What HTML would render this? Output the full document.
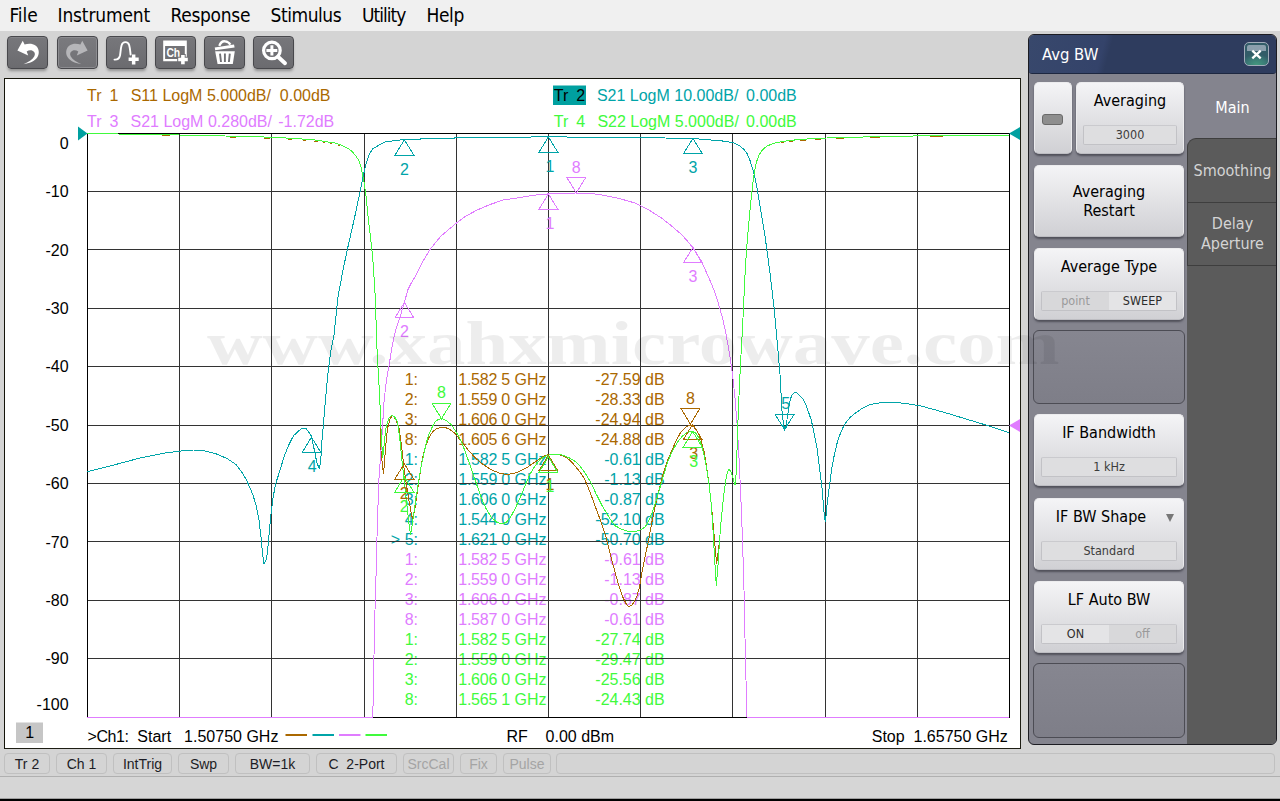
<!DOCTYPE html>
<html><head><meta charset="utf-8"><title>Network Analyzer</title>
<style>
*{box-sizing:border-box;margin:0;padding:0}
html,body{width:1280px;height:801px;overflow:hidden;background:#d4d4d4;font-family:"Liberation Sans",sans-serif}
.abs{position:absolute}
#menubar{position:absolute;left:0;top:0;width:1280px;height:31px;background:#f0f0f0}
#menubar span{position:absolute;top:3px;font-family:"DejaVu Sans Condensed","DejaVu Sans","Liberation Sans",sans-serif;font-size:19px;color:#000;line-height:24px;white-space:pre}
#toolbar{position:absolute;left:0;top:31px;width:1280px;height:47px;background:#d4d4d4}
.tb{position:absolute;top:5px;width:41px;height:33px;border-radius:4px;border:1px solid #48484c;background:linear-gradient(#77777b,#6b6b6f);box-shadow:inset 0 1px 0 rgba(255,255,255,.10),0 3px 3px -1px rgba(0,0,0,.33)}
.tb svg{position:absolute;left:-1px;top:-1px}
#win{position:absolute;left:4px;top:78px;width:1017px;overflow:hidden;height:671px;background:#fff;border:1px solid #14140a;border-right-color:#1e1e14;border-bottom-color:#1e1e14}
#chart{position:absolute;left:0;top:0}
#panel{position:absolute;left:1028px;top:34px;width:249px;height:711px;background:#84848e;border-radius:6px;border:1px solid #1c1c22}
#ptitle{position:absolute;left:0;top:0;width:247px;height:39px;background:linear-gradient(105deg,#38486c 0,#34436a 30%,#2e3c5e 33%);border-radius:5px 5px 3px 3px;border-bottom:1px solid #1d2740}
#statusbar{position:absolute;left:0;top:750px;width:1280px;height:28px;background:#d4d4d4}
#bottom{position:absolute;left:0;top:778px;width:1280px;height:23px;background:#d0d0d0}

#panel{font-family:"DejaVu Sans Condensed","DejaVu Sans","Liberation Sans",sans-serif;overflow:hidden}
#pclose{position:absolute;left:215px;top:7px;width:25px;height:24px;border:1px solid #a2acba;border-radius:5px;background:radial-gradient(ellipse 16px 11px at 50% 100%,#44997f,#3a7a76 60%,#325c68 100%);overflow:hidden}
#pclose:before{content:"";position:absolute;left:2px;right:2px;top:2px;height:6px;background:#8b9fad;border-radius:2px 2px 0 0}
#pclose svg{position:absolute;left:-1px;top:-1px}
#tabs{position:absolute;left:158px;top:114px;width:90px;height:596px;background:#5b5b5b}
.tab{position:absolute;left:158px;width:90px;background:#5b5b5b;border:1px solid #3e3e3e;border-right:none;color:#d4d4d4;font-size:16px;text-align:center}
.tab.sel{background:#84848e;border-color:#84848e;color:#fff}
.tab span{position:absolute;left:0;width:89px;line-height:20px}
.pb{position:absolute;width:150px;height:72px;border-radius:5px;background:linear-gradient(#f4f4f6,#e0e0e3 55%,#d0d0d4);box-shadow:0 2px 2px rgba(40,40,50,.55);border:1px solid #ececee;border-bottom-color:#bdbdc2}
.pb b{position:absolute;left:0;width:100%;text-align:center;font-weight:normal;font-size:16px;line-height:19px;color:#000}
.pb u{position:absolute;left:6px;right:6px;top:42.4px;height:20px;text-decoration:none;border:1px solid #c2c2c6;border-top-color:#cacace;background:#dedee0;font-size:12.5px;line-height:17px;text-align:center;color:#3c3c3c;border-radius:2px}
.pb u.sp{display:flex}
.pb u s{flex:1;text-decoration:none}
.pb u s.on{background:#e4e4e6;color:#2c2c2c}
.pb u s.off{background:#d8d8da;color:#9a9a9a}
.led{position:absolute;left:7px;top:31px;width:21px;height:11px;border-radius:3px;background:#8e8e8e;border:1px solid #6a6a6a}
.dd{position:absolute;left:131px;top:15px;width:0;height:0;border-left:4.5px solid transparent;border-right:4.5px solid transparent;border-top:8px solid #777}
.slot{position:absolute;left:4px;width:152px;height:74px;border-radius:6px;border:1px solid #4c4c54;background:linear-gradient(#868690,#7e7e88)}

.sb{position:absolute;top:3px;height:21px;border:1px solid #c0c0c0;border-radius:4px;font-size:14px;line-height:20px;text-align:center;color:#1c1c24;white-space:pre}
.sb.dis{color:#a4a4a4}
#statusbar{border-bottom:1px solid #b0b0b0;height:27px}
#bottom{top:777px;height:24px;background:#d6d6d6;border-bottom:2px solid #000;box-shadow:inset 0 -1px 0 #a0a0a0}
.tb.dis{background:linear-gradient(#7a7a7e,#717175);box-shadow:inset 0 0 0 1px #8c8c90,0 2px 2px rgba(0,0,0,.12)}
#wm{position:absolute;left:207px;top:308px;font-family:"Liberation Serif",serif;font-weight:bold;font-size:62px;line-height:70px;transform:scaleX(1.24);transform-origin:0 0;color:rgba(0,0,0,.07);white-space:nowrap;pointer-events:none}
</style></head>
<body>
<div id="menubar">
<span style="left:9.5px;letter-spacing:-.1px">File</span><span style="left:57.5px;letter-spacing:-.15px">Instrument</span><span style="left:170.5px;letter-spacing:-.3px">Response</span><span style="left:270.5px;letter-spacing:-.45px">Stimulus</span><span style="left:362px;letter-spacing:-1px">Utility</span><span style="left:426.5px;letter-spacing:-.4px">Help</span>
</div>
<div id="toolbar">
<div class="tb" style="left:7px"><svg width="41" height="33" viewBox="0 0 41 33"><path d="M10.4 14.4L15.75 4.75L17.6 8.6C21 7.2 25.5 7.2 28.5 9.5C32 12.2 32.8 17 30.5 21C28 25.2 22 27.5 16.5 28.2C21.5 26 25.5 23.5 27.2 20.5C28.6 17.8 27.8 15.6 25.5 14.7C23.5 14 21.5 14.3 19.7 15.4L21.2 19.4Z" fill="#fff"/></svg></div>
<div class="tb dis" style="left:57px"><svg width="41" height="33" viewBox="0 0 41 33"><g transform="translate(41,0) scale(-1,1)"><path d="M10.4 14.4L15.75 4.75L17.6 8.6C21 7.2 25.5 7.2 28.5 9.5C32 12.2 32.8 17 30.5 21C28 25.2 22 27.5 16.5 28.2C21.5 26 25.5 23.5 27.2 20.5C28.6 17.8 27.8 15.6 25.5 14.7C23.5 14 21.5 14.3 19.7 15.4L21.2 19.4Z" fill="#b6b6b9"/></g></svg></div>
<div class="tb" style="left:106px"><svg width="41" height="33" viewBox="0 0 41 33"><path d="M8.5 23.6C11.5 23.8 13.3 22.6 14 19.5C14.6 16.5 14.6 12.5 15.6 9.2C16.4 6.8 18 6.1 19.4 6.1C21 6.1 22.5 6.9 23.2 9.2C24.1 12.3 24.2 15.5 24.6 18.5" stroke="#fff" stroke-width="1.9" fill="none" stroke-linecap="round"/><path d="M22.6 21.6H25.9V18.6H29.4V21.6H32.7V25.1H29.4V28.4H25.9V25.1H22.6Z" fill="#fff"/></svg></div>
<div class="tb" style="left:155px"><svg width="41" height="33" viewBox="0 0 41 33"><path d="M8.2 4.4H31.8V25.3H8.2Z M10.1 9.9V23H29.8V9.9Z" fill="#fff" fill-rule="evenodd"/><text x="11.4" y="20.7" font-family="Liberation Sans, sans-serif" font-weight="bold" font-size="12" fill="#fff" textLength="13.8" lengthAdjust="spacingAndGlyphs">Ch</text><path d="M22.2 20.8H25.1V18H30.7V20.8H33.8V26.2H30.7V29.2H25.1V26.2H22.2Z" fill="#707074"/><path d="M23.2 21.8H26.1V19H29.7V21.8H32.8V25.2H29.7V28.2H26.1V25.2H23.2Z" fill="#fff"/></svg></div>
<div class="tb" style="left:204px"><svg width="41" height="33" viewBox="0 0 41 33"><path d="M15.3 9.9C16.5 6.6 19 5.1 21 5.3C23.4 5.5 25.3 6.8 26.4 8.6" stroke="#fff" stroke-width="2.3" fill="none"/><path d="M10.7 11.4L30 8.5L30.6 11.4L11.2 14.3Z" fill="#fff"/><path d="M11.2 15.2H30.8L28.8 28H13.6Z" fill="#fff"/><path d="M16 17.6L17 26M20.9 17.6V26M25.8 17.6L24.9 26" stroke="#707074" stroke-width="1.9" fill="none"/></svg></div>
<div class="tb" style="left:253px"><svg width="41" height="33" viewBox="0 0 41 33"><circle cx="18.9" cy="14.4" r="8.3" stroke="#fff" stroke-width="3.2" fill="none"/><path d="M13.4 14.4H24.3M18.9 9.2V19.5" stroke="#fff" stroke-width="3" fill="none"/><path d="M25 20.8L32 27.2" stroke="#fff" stroke-width="3.9" stroke-linecap="round"/></svg></div>

</div>
<div id="win">
<svg id="chart" width="1016" height="669" viewBox="0 0 1016 669" font-family="Liberation Sans, sans-serif" font-size="16">
<text x="82.0" y="22.3" fill="#aa6800" text-anchor="start" xml:space="preserve">Tr</text>
<text x="104.5" y="22.3" fill="#aa6800" text-anchor="start" xml:space="preserve">1</text>
<text x="125.7" y="22.3" fill="#aa6800" text-anchor="start" xml:space="preserve">S11 LogM 5.000dB/  0.00dB</text>
<text x="82.0" y="47.7" fill="#e07cff" text-anchor="start" xml:space="preserve">Tr</text>
<text x="104.5" y="47.7" fill="#e07cff" text-anchor="start" xml:space="preserve">3</text>
<text x="125.5" y="47.7" fill="#e07cff" text-anchor="start" xml:space="preserve">S21 LogM 0.280dB/</text>
<text x="329.3" y="47.7" fill="#e07cff" text-anchor="end" xml:space="preserve">-1.72dB</text>
<rect x="548" y="6.5" width="33" height="19.5" fill="#00a0a0"/>
<text x="548.8" y="22.3" fill="#000" text-anchor="start" xml:space="preserve">Tr</text>
<text x="571.2" y="22.3" fill="#000" text-anchor="start" xml:space="preserve">2</text>
<text x="591.9" y="22.3" fill="#00a4a8" text-anchor="start" xml:space="preserve">S21 LogM 10.00dB/</text>
<text x="791.8" y="22.3" fill="#00a4a8" text-anchor="end" xml:space="preserve">0.00dB</text>
<text x="548.8" y="47.7" fill="#40fa3c" text-anchor="start" xml:space="preserve">Tr</text>
<text x="571.2" y="47.7" fill="#40fa3c" text-anchor="start" xml:space="preserve">4</text>
<text x="592.4" y="47.7" fill="#40fa3c" text-anchor="start" xml:space="preserve">S22 LogM 5.000dB/</text>
<text x="791.8" y="47.7" fill="#40fa3c" text-anchor="end" xml:space="preserve">0.00dB</text>
<text x="63.6" y="69.7" fill="#000" text-anchor="end" xml:space="preserve">0</text>
<text x="63.6" y="118.2" fill="#000" text-anchor="end" xml:space="preserve">-10</text>
<text x="63.6" y="176.6" fill="#000" text-anchor="end" xml:space="preserve">-20</text>
<text x="63.6" y="235.0" fill="#000" text-anchor="end" xml:space="preserve">-30</text>
<text x="63.6" y="293.4" fill="#000" text-anchor="end" xml:space="preserve">-40</text>
<text x="63.6" y="351.8" fill="#000" text-anchor="end" xml:space="preserve">-50</text>
<text x="63.6" y="410.2" fill="#000" text-anchor="end" xml:space="preserve">-60</text>
<text x="63.6" y="468.6" fill="#000" text-anchor="end" xml:space="preserve">-70</text>
<text x="63.6" y="527.0" fill="#000" text-anchor="end" xml:space="preserve">-80</text>
<text x="63.6" y="585.4" fill="#000" text-anchor="end" xml:space="preserve">-90</text>
<text x="63.6" y="631.3" fill="#000" text-anchor="end" xml:space="preserve">-100</text>
<text x="413.0" y="306.2" fill="#aa6800" text-anchor="end" xml:space="preserve">1:</text>
<text x="453.3" y="306.2" fill="#aa6800" text-anchor="start" xml:space="preserve" textLength="51.8" lengthAdjust="spacing">1.582 5</text>
<text x="541.6" y="306.2" fill="#aa6800" text-anchor="end" xml:space="preserve">GHz</text>
<text x="659.7" y="306.2" fill="#aa6800" text-anchor="end" xml:space="preserve">-27.59 dB</text>
<text x="413.0" y="326.2" fill="#aa6800" text-anchor="end" xml:space="preserve">2:</text>
<text x="453.3" y="326.2" fill="#aa6800" text-anchor="start" xml:space="preserve" textLength="51.8" lengthAdjust="spacing">1.559 0</text>
<text x="541.6" y="326.2" fill="#aa6800" text-anchor="end" xml:space="preserve">GHz</text>
<text x="659.7" y="326.2" fill="#aa6800" text-anchor="end" xml:space="preserve">-28.33 dB</text>
<text x="413.0" y="346.1" fill="#aa6800" text-anchor="end" xml:space="preserve">3:</text>
<text x="453.3" y="346.1" fill="#aa6800" text-anchor="start" xml:space="preserve" textLength="51.8" lengthAdjust="spacing">1.606 0</text>
<text x="541.6" y="346.1" fill="#aa6800" text-anchor="end" xml:space="preserve">GHz</text>
<text x="659.7" y="346.1" fill="#aa6800" text-anchor="end" xml:space="preserve">-24.94 dB</text>
<text x="413.0" y="366.1" fill="#aa6800" text-anchor="end" xml:space="preserve">8:</text>
<text x="453.3" y="366.1" fill="#aa6800" text-anchor="start" xml:space="preserve" textLength="51.8" lengthAdjust="spacing">1.605 6</text>
<text x="541.6" y="366.1" fill="#aa6800" text-anchor="end" xml:space="preserve">GHz</text>
<text x="659.7" y="366.1" fill="#aa6800" text-anchor="end" xml:space="preserve">-24.88 dB</text>
<text x="413.0" y="386.0" fill="#00a4a8" text-anchor="end" xml:space="preserve">1:</text>
<text x="453.3" y="386.0" fill="#00a4a8" text-anchor="start" xml:space="preserve" textLength="51.8" lengthAdjust="spacing">1.582 5</text>
<text x="541.6" y="386.0" fill="#00a4a8" text-anchor="end" xml:space="preserve">GHz</text>
<text x="659.7" y="386.0" fill="#00a4a8" text-anchor="end" xml:space="preserve">-0.61 dB</text>
<text x="413.0" y="406.0" fill="#00a4a8" text-anchor="end" xml:space="preserve">2:</text>
<text x="453.3" y="406.0" fill="#00a4a8" text-anchor="start" xml:space="preserve" textLength="51.8" lengthAdjust="spacing">1.559 0</text>
<text x="541.6" y="406.0" fill="#00a4a8" text-anchor="end" xml:space="preserve">GHz</text>
<text x="659.7" y="406.0" fill="#00a4a8" text-anchor="end" xml:space="preserve">-1.13 dB</text>
<text x="413.0" y="426.0" fill="#00a4a8" text-anchor="end" xml:space="preserve">3:</text>
<text x="453.3" y="426.0" fill="#00a4a8" text-anchor="start" xml:space="preserve" textLength="51.8" lengthAdjust="spacing">1.606 0</text>
<text x="541.6" y="426.0" fill="#00a4a8" text-anchor="end" xml:space="preserve">GHz</text>
<text x="659.7" y="426.0" fill="#00a4a8" text-anchor="end" xml:space="preserve">-0.87 dB</text>
<text x="413.0" y="445.9" fill="#00a4a8" text-anchor="end" xml:space="preserve">4:</text>
<text x="453.3" y="445.9" fill="#00a4a8" text-anchor="start" xml:space="preserve" textLength="51.8" lengthAdjust="spacing">1.544 0</text>
<text x="541.6" y="445.9" fill="#00a4a8" text-anchor="end" xml:space="preserve">GHz</text>
<text x="659.7" y="445.9" fill="#00a4a8" text-anchor="end" xml:space="preserve">-52.10 dB</text>
<text x="413.0" y="465.9" fill="#00a4a8" text-anchor="end" xml:space="preserve">&gt; 5:</text>
<text x="453.3" y="465.9" fill="#00a4a8" text-anchor="start" xml:space="preserve" textLength="51.8" lengthAdjust="spacing">1.621 0</text>
<text x="541.6" y="465.9" fill="#00a4a8" text-anchor="end" xml:space="preserve">GHz</text>
<text x="659.7" y="465.9" fill="#00a4a8" text-anchor="end" xml:space="preserve">-50.70 dB</text>
<text x="413.0" y="485.8" fill="#e07cff" text-anchor="end" xml:space="preserve">1:</text>
<text x="453.3" y="485.8" fill="#e07cff" text-anchor="start" xml:space="preserve" textLength="51.8" lengthAdjust="spacing">1.582 5</text>
<text x="541.6" y="485.8" fill="#e07cff" text-anchor="end" xml:space="preserve">GHz</text>
<text x="659.7" y="485.8" fill="#e07cff" text-anchor="end" xml:space="preserve">-0.61 dB</text>
<text x="413.0" y="505.8" fill="#e07cff" text-anchor="end" xml:space="preserve">2:</text>
<text x="453.3" y="505.8" fill="#e07cff" text-anchor="start" xml:space="preserve" textLength="51.8" lengthAdjust="spacing">1.559 0</text>
<text x="541.6" y="505.8" fill="#e07cff" text-anchor="end" xml:space="preserve">GHz</text>
<text x="659.7" y="505.8" fill="#e07cff" text-anchor="end" xml:space="preserve">-1.13 dB</text>
<text x="413.0" y="525.8" fill="#e07cff" text-anchor="end" xml:space="preserve">3:</text>
<text x="453.3" y="525.8" fill="#e07cff" text-anchor="start" xml:space="preserve" textLength="51.8" lengthAdjust="spacing">1.606 0</text>
<text x="541.6" y="525.8" fill="#e07cff" text-anchor="end" xml:space="preserve">GHz</text>
<text x="659.7" y="525.8" fill="#e07cff" text-anchor="end" xml:space="preserve">-0.87 dB</text>
<text x="413.0" y="545.7" fill="#e07cff" text-anchor="end" xml:space="preserve">8:</text>
<text x="453.3" y="545.7" fill="#e07cff" text-anchor="start" xml:space="preserve" textLength="51.8" lengthAdjust="spacing">1.587 0</text>
<text x="541.6" y="545.7" fill="#e07cff" text-anchor="end" xml:space="preserve">GHz</text>
<text x="659.7" y="545.7" fill="#e07cff" text-anchor="end" xml:space="preserve">-0.61 dB</text>
<text x="413.0" y="565.7" fill="#40fa3c" text-anchor="end" xml:space="preserve">1:</text>
<text x="453.3" y="565.7" fill="#40fa3c" text-anchor="start" xml:space="preserve" textLength="51.8" lengthAdjust="spacing">1.582 5</text>
<text x="541.6" y="565.7" fill="#40fa3c" text-anchor="end" xml:space="preserve">GHz</text>
<text x="659.7" y="565.7" fill="#40fa3c" text-anchor="end" xml:space="preserve">-27.74 dB</text>
<text x="413.0" y="585.6" fill="#40fa3c" text-anchor="end" xml:space="preserve">2:</text>
<text x="453.3" y="585.6" fill="#40fa3c" text-anchor="start" xml:space="preserve" textLength="51.8" lengthAdjust="spacing">1.559 0</text>
<text x="541.6" y="585.6" fill="#40fa3c" text-anchor="end" xml:space="preserve">GHz</text>
<text x="659.7" y="585.6" fill="#40fa3c" text-anchor="end" xml:space="preserve">-29.47 dB</text>
<text x="413.0" y="605.6" fill="#40fa3c" text-anchor="end" xml:space="preserve">3:</text>
<text x="453.3" y="605.6" fill="#40fa3c" text-anchor="start" xml:space="preserve" textLength="51.8" lengthAdjust="spacing">1.606 0</text>
<text x="541.6" y="605.6" fill="#40fa3c" text-anchor="end" xml:space="preserve">GHz</text>
<text x="659.7" y="605.6" fill="#40fa3c" text-anchor="end" xml:space="preserve">-25.56 dB</text>
<text x="413.0" y="625.6" fill="#40fa3c" text-anchor="end" xml:space="preserve">8:</text>
<text x="453.3" y="625.6" fill="#40fa3c" text-anchor="start" xml:space="preserve" textLength="51.8" lengthAdjust="spacing">1.565 1</text>
<text x="541.6" y="625.6" fill="#40fa3c" text-anchor="end" xml:space="preserve">GHz</text>
<text x="659.7" y="625.6" fill="#40fa3c" text-anchor="end" xml:space="preserve">-24.43 dB</text>
<path d="M174.5 54V639M266.5 54V639M359.5 54V639M451.5 54V639M543.5 54V639M635.5 54V639M727.5 54V639M820.5 54V639M912.5 54V639M82 112.5H1005M82 170.5H1005M82 229.5H1005M82 287.5H1005M82 346.5H1005M82 404.5H1005M82 462.5H1005M82 521.5H1005M82 579.5H1005" stroke="#333" stroke-width="1" fill="none" shape-rendering="crispEdges"/>
<path d="M82.5 54.5H1004.5V638.5H82.5Z" stroke="#000" stroke-width="1" fill="none" shape-rendering="crispEdges"/>
<path d="M82.0 54.5 L125.0 55.2 L174.5 56.0 L220.0 57.0 L266.7 58.2 L290.0 59.5 L310.0 61.0 L329.6 64.0 L337.0 66.3 L342.8 69.3 L347.0 72.5 L351.0 77.0 L354.0 82.0 L356.0 88.0 L359.0 102.8 L361.0 117.0 L362.5 132.0 L364.5 150.0 L366.7 168.4 L368.0 183.0 L369.0 198.0 L370.0 214.0 L370.7 230.8 L371.6 260.0 L372.5 281.0 L373.7 300.0 L375.0 326.0 L376.0 372.0 L377.3 385.0 L378.6 395.0 L380.0 376.0 L381.3 361.0 L382.6 349.0 L385.0 340.0 L387.5 336.3 L391.0 341.0 L394.0 349.0 L396.5 367.0 L399.0 388.8 L401.5 406.0 L404.0 421.6 L406.0 433.0 L407.8 441.0 L410.0 429.0 L412.0 415.0 L414.5 398.0 L417.0 382.0 L420.0 369.0 L423.6 359.0 L427.5 353.0 L431.8 349.4 L436.0 348.5 L440.0 348.4 L445.0 350.5 L449.8 354.3 L456.0 362.0 L463.0 370.8 L469.5 378.0 L476.0 383.9 L482.5 388.5 L489.0 392.0 L495.5 394.5 L502.3 395.4 L509.0 394.5 L515.4 392.0 L522.0 388.5 L528.6 384.0 L533.5 380.5 L538.4 377.3 L543.0 375.8 L548.0 375.0 L554.5 375.8 L560.3 378.0 L564.5 381.0 L568.8 385.5 L573.8 391.5 L578.8 398.6 L582.8 407.5 L586.8 418.0 L591.2 430.0 L596.7 444.6 L601.5 460.0 L605.7 477.0 L610.0 493.0 L614.0 507.0 L618.0 518.5 L621.0 524.5 L623.7 527.7 L627.0 526.0 L629.5 522.5 L632.0 516.8 L634.5 508.0 L636.8 493.8 L640.0 478.0 L643.4 462.0 L646.7 444.0 L650.0 428.0 L654.0 411.0 L658.0 395.4 L662.0 383.0 L666.4 372.4 L671.0 362.0 L676.0 352.7 L681.0 348.0 L685.4 346.0 L689.0 348.0 L692.6 352.7 L696.0 361.0 L699.0 372.4 L701.5 387.0 L704.0 405.0 L706.3 426.0 L708.4 448.0 L710.0 467.0 L711.6 484.6 L713.0 474.0 L714.5 462.0 L716.0 443.0 L717.7 426.0 L719.3 412.0 L721.0 400.0 L722.5 393.0 L724.0 390.0 L725.8 392.5 L727.5 397.0 L729.0 403.0 L730.0 406.0 L731.0 396.0 L731.7 381.0 L732.5 357.0 L733.3 332.0 L734.5 306.0 L735.6 283.5 L736.5 266.0 L737.2 255.0 L738.0 239.0 L738.8 221.8 L739.6 204.0 L740.5 186.0 L741.7 169.0 L743.0 153.6 L744.2 140.0 L745.3 127.6 L747.0 112.0 L748.6 98.4 L750.2 89.0 L751.8 82.0 L754.0 76.0 L756.7 71.8 L759.5 68.8 L763.0 66.6 L768.0 64.6 L773.0 63.3 L782.0 61.8 L792.4 60.7 L807.0 59.7 L821.6 59.0 L845.0 58.3 L867.0 57.8 L895.0 57.2 L922.0 56.8 L965.0 56.4 L1004.0 56.2" stroke="#aa6800" stroke-width="1" fill="none" stroke-linejoin="round" shape-rendering="crispEdges"/>
<path d="M82.0 392.7 L105.0 387.0 L135.0 379.0 L160.0 374.0 L180.0 371.5 L188.6 371.0 L200.0 372.0 L211.5 375.0 L222.0 379.5 L231.0 385.5 L236.0 392.0 L241.0 400.0 L247.6 415.0 L251.0 426.0 L254.0 441.0 L256.0 458.0 L257.5 474.0 L259.0 484.6 L261.0 481.0 L262.4 474.0 L264.0 456.0 L265.7 438.0 L268.0 419.0 L270.6 405.0 L275.0 391.3 L279.4 376.5 L284.6 364.2 L288.5 356.8 L293.0 352.4 L296.8 349.4 L300.8 349.4 L303.0 352.0 L306.5 357.2 L308.2 366.0 L310.0 373.8 L311.7 383.4 L314.3 389.6 L315.6 383.4 L316.3 373.0 L317.0 361.6 L318.3 346.7 L319.6 331.0 L320.8 317.0 L323.0 293.6 L326.0 271.0 L329.0 256.0 L333.0 217.7 L338.0 191.0 L342.8 168.4 L347.0 150.0 L351.0 132.0 L355.0 113.0 L358.0 98.0 L361.0 85.0 L364.0 76.0 L367.4 70.0 L375.0 65.5 L380.0 63.0 L385.0 62.3 L391.0 61.2 L399.4 60.8 L415.5 60.8 L416.0 59.4 L449.0 59.4 L450.0 58.5 L495.0 58.2 L543.4 57.9 L595.0 58.2 L635.0 58.5 L660.0 59.0 L687.9 59.4 L700.0 60.6 L712.0 61.4 L721.0 62.4 L728.7 64.0 L734.0 66.4 L738.5 70.0 L742.0 74.5 L745.0 81.4 L748.0 91.0 L750.5 101.0 L753.4 117.0 L756.0 133.0 L760.0 157.0 L764.8 192.5 L769.0 228.0 L772.0 260.7 L775.5 301.0 L776.3 322.0 L777.3 336.0 L779.6 351.5 L781.0 347.0 L783.0 334.2 L784.3 324.6 L786.5 316.7 L788.6 314.1 L791.3 313.2 L794.3 316.3 L797.8 319.8 L800.5 324.6 L803.0 331.6 L806.0 340.3 L807.5 346.5 L809.2 355.2 L811.8 367.4 L813.5 381.0 L816.8 406.8 L819.0 432.8 L820.3 443.0 L821.0 437.0 L822.0 426.0 L824.9 403.6 L827.0 388.0 L829.7 374.0 L832.0 364.5 L834.6 356.5 L837.5 349.5 L841.0 343.5 L845.5 338.0 L850.8 333.8 L857.0 329.5 L863.8 326.0 L871.0 324.3 L880.0 323.4 L893.0 323.7 L904.0 325.0 L915.8 327.0 L932.0 331.3 L948.0 336.0 L965.0 341.2 L980.7 346.0 L1004.0 353.8" stroke="#00a4a8" stroke-width="1" fill="none" stroke-linejoin="round" shape-rendering="crispEdges"/>
<path d="M82.0 638.0 L367.8 638.0 L368.5 601.0 L369.3 561.0 L370.0 531.0 L370.8 506.0 L371.6 471.0 L372.5 441.0 L374.0 399.0 L376.0 371.0 L377.7 345.0 L379.0 323.0 L380.5 309.0 L382.3 296.0 L384.2 285.7 L386.5 271.0 L389.4 256.0 L392.0 247.0 L394.9 238.5 L399.4 223.4 L402.8 211.0 L406.5 203.5 L410.5 197.0 L417.0 184.0 L425.0 170.4 L436.0 157.0 L449.8 145.4 L461.0 137.0 L472.8 130.7 L485.0 125.5 L499.0 120.8 L515.0 118.6 L529.0 116.2 L543.4 114.9 L555.0 114.2 L571.3 114.0 L585.0 114.3 L598.0 116.2 L615.0 119.7 L630.0 124.0 L643.0 130.5 L656.5 139.0 L666.0 146.5 L676.0 155.0 L682.0 161.5 L687.7 168.4 L693.0 177.0 L699.0 188.0 L704.0 199.0 L709.0 211.0 L713.0 223.0 L717.0 237.0 L720.0 250.0 L723.0 266.0 L725.5 281.0 L727.5 295.0 L730.0 319.0 L732.3 348.0 L734.0 379.0 L735.6 413.0 L737.0 448.0 L738.0 478.0 L739.0 511.0 L740.0 559.0 L741.0 601.0 L741.8 638.0 L1004.0 638.0" stroke="#e07cff" stroke-width="1" fill="none" stroke-linejoin="round" shape-rendering="crispEdges"/>
<path d="M82.0 54.5 L125.0 55.2 L174.5 56.0 L220.0 57.0 L266.7 58.2 L290.0 59.5 L310.0 61.0 L329.6 64.0 L337.0 66.3 L342.8 69.3 L347.0 72.5 L351.0 77.0 L354.0 82.0 L356.0 88.0 L359.0 102.8 L361.0 117.0 L362.5 132.0 L364.5 150.0 L366.7 168.4 L368.0 183.0 L369.0 198.0 L370.0 214.0 L370.7 230.8 L371.6 260.0 L372.5 281.0 L373.7 300.0 L375.0 326.0 L376.0 349.4 L377.0 368.0 L377.6 379.0 L378.5 373.0 L379.6 361.0 L381.0 349.0 L382.5 343.0 L384.0 339.0 L386.0 337.0 L387.5 336.3 L390.0 338.5 L392.4 343.0 L394.5 357.0 L397.0 382.0 L399.0 399.0 L400.6 415.0 L402.5 431.0 L404.0 444.6 L405.5 456.0 L407.0 447.0 L408.8 434.7 L411.0 419.0 L413.7 402.0 L416.0 388.0 L418.7 375.7 L421.0 365.0 L423.6 356.0 L427.0 348.5 L430.0 343.0 L433.5 340.3 L436.7 339.6 L441.0 341.3 L446.5 346.0 L451.5 353.5 L456.4 362.5 L461.0 375.0 L466.0 388.8 L471.0 403.5 L476.0 418.0 L481.0 429.5 L486.0 438.0 L492.0 443.3 L497.4 445.0 L501.5 443.0 L505.6 438.0 L510.5 429.0 L515.4 418.0 L520.0 407.0 L525.0 395.0 L530.0 387.0 L535.0 380.6 L540.0 377.5 L545.0 375.7 L549.0 375.0 L553.0 375.0 L558.5 376.3 L564.6 379.0 L571.0 383.0 L576.4 388.8 L581.7 396.5 L586.5 405.0 L591.2 415.0 L596.2 425.0 L601.2 433.5 L605.8 441.0 L610.5 447.0 L617.0 450.5 L623.0 452.3 L628.6 452.8 L634.5 451.5 L640.0 448.0 L643.5 442.5 L646.7 434.7 L651.0 422.0 L655.0 408.5 L659.0 395.0 L663.0 382.0 L668.0 371.0 L673.0 362.5 L677.0 357.5 L681.0 354.3 L684.5 352.6 L687.7 352.0 L691.0 354.5 L694.0 359.0 L696.5 366.0 L699.0 375.7 L701.5 389.0 L704.0 405.0 L706.0 423.0 L707.4 441.0 L708.6 461.0 L709.7 480.7 L711.3 507.0 L713.0 486.0 L714.5 462.0 L716.0 443.0 L717.7 426.0 L719.3 412.0 L721.0 400.0 L722.5 393.0 L724.0 390.0 L725.8 392.5 L727.5 397.0 L729.0 403.0 L730.0 406.0 L731.0 396.0 L731.7 381.0 L732.5 357.0 L733.3 332.0 L734.5 306.0 L735.6 283.5 L736.5 266.0 L737.2 255.0 L738.0 239.0 L738.8 221.8 L739.6 204.0 L740.5 186.0 L741.7 169.0 L743.0 153.6 L744.2 140.0 L745.3 127.6 L747.0 112.0 L748.6 98.4 L750.2 89.0 L751.8 82.0 L754.0 76.0 L756.7 71.8 L759.5 68.8 L763.0 66.6 L768.0 64.6 L773.0 63.3 L782.0 61.8 L792.4 60.7 L807.0 59.7 L821.6 59.0 L845.0 58.3 L867.0 57.8 L895.0 57.2 L922.0 56.8 L965.0 56.4 L1004.0 56.2" stroke="#40fa3c" stroke-width="1" fill="none" stroke-linejoin="round" shape-rendering="crispEdges"/>
<rect x="157.0" y="56" width="8.0" height="1" fill="#aa6800" shape-rendering="crispEdges"/>
<rect x="224.5" y="58" width="6.5" height="1" fill="#aa6800" shape-rendering="crispEdges"/>
<rect x="259.0" y="59" width="6.0" height="1" fill="#aa6800" shape-rendering="crispEdges"/>
<rect x="283.0" y="60" width="4.0" height="1" fill="#aa6800" shape-rendering="crispEdges"/>
<rect x="297.6" y="61" width="3.4" height="1" fill="#aa6800" shape-rendering="crispEdges"/>
<rect x="309.0" y="62" width="4.0" height="1" fill="#aa6800" shape-rendering="crispEdges"/>
<rect x="317.5" y="63" width="2.0" height="1" fill="#aa6800" shape-rendering="crispEdges"/>
<rect x="324.5" y="64" width="2.0" height="1" fill="#aa6800" shape-rendering="crispEdges"/>
<rect x="332.5" y="66" width="2.0" height="1" fill="#aa6800" shape-rendering="crispEdges"/>
<rect x="831.0" y="59" width="8.0" height="1" fill="#aa6800" shape-rendering="crispEdges"/>
<rect x="865.0" y="58" width="10.0" height="1" fill="#aa6800" shape-rendering="crispEdges"/>
<rect x="925.0" y="57" width="13.0" height="1" fill="#aa6800" shape-rendering="crispEdges"/>
<rect x="795.0" y="61" width="6.0" height="1" fill="#aa6800" shape-rendering="crispEdges"/>
<rect x="810.0" y="60" width="6.0" height="1" fill="#aa6800" shape-rendering="crispEdges"/>
<rect x="776.0" y="63" width="3.0" height="1" fill="#aa6800" shape-rendering="crispEdges"/>
<rect x="784.0" y="62" width="4.0" height="1" fill="#aa6800" shape-rendering="crispEdges"/>
<path d="M543.4 376.3L533.9 391.8H552.9Z" stroke="#aa6800" stroke-width="1" fill="none" shape-rendering="crispEdges"/><text x="544.9" y="411.3" fill="#aa6800" text-anchor="middle">1</text>
<path d="M399.3 384.7L389.8 400.2H408.8Z" stroke="#aa6800" stroke-width="1" fill="none" shape-rendering="crispEdges"/><text x="399.3" y="419.7" fill="#aa6800" text-anchor="middle">2</text>
<path d="M687.7 345.3L678.2 360.8H697.2Z" stroke="#aa6800" stroke-width="1" fill="none" shape-rendering="crispEdges"/><text x="688.7" y="380.3" fill="#aa6800" text-anchor="middle">3</text>
<path d="M685.4 345.0L675.9 329.5H694.9Z" stroke="#aa6800" stroke-width="1" fill="none" shape-rendering="crispEdges"/><text x="685.4" y="324.6" fill="#aa6800" text-anchor="middle">8</text>
<path d="M543.4 57.9L533.9 73.4H552.9Z" stroke="#00a4a8" stroke-width="1" fill="none" shape-rendering="crispEdges"/><text x="544.9" y="92.9" fill="#00a4a8" text-anchor="middle">1</text>
<path d="M399.4 60.8L389.9 76.3H408.9Z" stroke="#00a4a8" stroke-width="1" fill="none" shape-rendering="crispEdges"/><text x="399.4" y="95.8" fill="#00a4a8" text-anchor="middle">2</text>
<path d="M687.9 59.4L678.4 74.9H697.4Z" stroke="#00a4a8" stroke-width="1" fill="none" shape-rendering="crispEdges"/><text x="687.9" y="94.4" fill="#00a4a8" text-anchor="middle">3</text>
<path d="M306.5 358.2L297.0 373.7H316.0Z" stroke="#00a4a8" stroke-width="1" fill="none" shape-rendering="crispEdges"/><text x="307.3" y="393.2" fill="#00a4a8" text-anchor="middle">4</text>
<path d="M779.6 350.8L770.1 335.3H789.1Z" stroke="#00a4a8" stroke-width="1" fill="none" shape-rendering="crispEdges"/><text x="780.6" y="330.4" fill="#00a4a8" text-anchor="middle">5</text>
<path d="M543.4 114.9L533.9 130.4H552.9Z" stroke="#e07cff" stroke-width="1" fill="none" shape-rendering="crispEdges"/><text x="544.9" y="149.9" fill="#e07cff" text-anchor="middle">1</text>
<path d="M399.4 223.4L389.9 238.9H408.9Z" stroke="#e07cff" stroke-width="1" fill="none" shape-rendering="crispEdges"/><text x="399.4" y="258.4" fill="#e07cff" text-anchor="middle">2</text>
<path d="M687.9 168.4L678.4 183.9H697.4Z" stroke="#e07cff" stroke-width="1" fill="none" shape-rendering="crispEdges"/><text x="687.9" y="203.4" fill="#e07cff" text-anchor="middle">3</text>
<path d="M571.3 113.9L561.8 98.4H580.8Z" stroke="#e07cff" stroke-width="1" fill="none" shape-rendering="crispEdges"/><text x="571.3" y="93.5" fill="#e07cff" text-anchor="middle">8</text>
<path d="M543.4 378.0L533.9 393.5H552.9Z" stroke="#40fa3c" stroke-width="1" fill="none" shape-rendering="crispEdges"/><text x="544.9" y="413.0" fill="#40fa3c" text-anchor="middle">1</text>
<path d="M399.3 397.6L389.8 413.1H408.8Z" stroke="#40fa3c" stroke-width="1" fill="none" shape-rendering="crispEdges"/><text x="399.3" y="432.6" fill="#40fa3c" text-anchor="middle">2</text>
<path d="M687.7 352.5L678.2 368.0H697.2Z" stroke="#40fa3c" stroke-width="1" fill="none" shape-rendering="crispEdges"/><text x="688.7" y="387.5" fill="#40fa3c" text-anchor="middle">3</text>
<path d="M436.5 339.7L427.0 324.2H446.0Z" stroke="#40fa3c" stroke-width="1" fill="none" shape-rendering="crispEdges"/><text x="436.5" y="319.3" fill="#40fa3c" text-anchor="middle">8</text>
<path d="M73 47.5L82.5 54.5L73 61.5Z" fill="#00a0a0"/>
<path d="M1015.5 47.8L1004 54.5L1015.5 61.19999999999999Z" fill="#00a0a0"/>
<path d="M1015.5 339.8L1004 346.5L1015.5 353.2Z" fill="#e07cff"/>
<rect x="11" y="643.5" width="27" height="20.5" fill="#c6c6c6"/>
<text x="24.6" y="659.3" fill="#000" text-anchor="middle" xml:space="preserve">1</text>
<text x="82.5" y="662.5" fill="#000" text-anchor="start" xml:space="preserve" textLength="41.5" lengthAdjust="spacing">&gt;Ch1:</text>
<text x="132.3" y="662.5" fill="#000" text-anchor="start" xml:space="preserve">Start</text>
<text x="273.4" y="662.5" fill="#000" text-anchor="end" xml:space="preserve">1.50750 GHz</text>
<rect x="280.5" y="655" width="21.5" height="2" fill="#aa6800"/>
<rect x="307.5" y="655" width="21.5" height="2" fill="#00a4a8"/>
<rect x="334" y="655" width="21.5" height="2" fill="#e07cff"/>
<rect x="360.5" y="655" width="21.5" height="2" fill="#40fa3c"/>
<text x="501.5" y="662.5" fill="#000" text-anchor="start" xml:space="preserve">RF    0.00 dBm</text>
<text x="1002.8" y="662.5" fill="#000" text-anchor="end" xml:space="preserve">Stop  1.65750 GHz</text>
</svg>
</div>
<div id="panel">
<div id="ptitle"></div>
<div id="ptxt" class="abs" style="left:13px;top:9px;font-size:16.5px;line-height:22px;color:#fff">Avg BW</div>
<div id="pclose"><svg width="25" height="24" viewBox="0 0 25 24"><path d="M8.3 8.6L16.7 16.4M16.7 8.6L8.3 16.4" stroke="#fff" stroke-width="2.3" stroke-linecap="butt"/></svg></div>
<div id="tabs"></div>
<div class="tab sel" style="top:39px;height:66px"><span style="top:23px">Main</span></div>
<div class="tab" style="top:103px;height:65px;border-top-left-radius:9px"><span style="top:22px">Smoothing</span></div>
<div class="tab" style="top:167px;height:64px"><span style="top:11px">Delay<br>Aperture</span></div>

<div class="pb" style="left:5px;top:47px;width:38px"><i class="led"></i></div>
<div class="pb" style="left:47px;top:47px;width:108px"><b style="top:8px">Averaging</b><u>3000</u></div>
<div class="pb" style="left:5px;top:130px"><b style="top:16px">Averaging<br>Restart</b></div>
<div class="pb" style="left:5px;top:213px"><b style="top:8px">Average Type</b><u class="sp"><s class="off">point</s><s class="on">SWEEP</s></u></div>
<div class="slot" style="top:295px"></div>
<div class="pb" style="left:5px;top:378.5px"><b style="top:8px">IF Bandwidth</b><u>1 kHz</u></div>
<div class="pb" style="left:5px;top:463px"><b style="top:8px;left:-8px">IF BW Shape</b><i class="dd"></i><u>Standard</u></div>
<div class="pb" style="left:5px;top:546px"><b style="top:8px">LF Auto BW</b><u class="sp"><s class="on">ON</s><s class="off">off</s></u></div>
<div class="slot" style="top:627.5px;height:75px"></div>

</div>
<div id="statusbar">
<div class="sb" style="left:4px;width:46px">Tr 2</div>
<div class="sb" style="left:56px;width:51px">Ch 1</div>
<div class="sb" style="left:113px;width:59px">IntTrig</div>
<div class="sb" style="left:178px;width:51px">Swp</div>
<div class="sb" style="left:235px;width:75px">BW=1k</div>
<div class="sb" style="left:316px;width:81px">C  2-Port</div>
<div class="sb dis" style="left:403px;width:51px">SrcCal</div>
<div class="sb dis" style="left:460px;width:37px">Fix</div>
<div class="sb dis" style="left:503px;width:48px">Pulse</div>
<div class="sb" style="left:556px;width:719px"></div>

</div>
<div id="bottom"></div>
<div id="wm">www.xahxmicrowave.com</div>
</body></html>
